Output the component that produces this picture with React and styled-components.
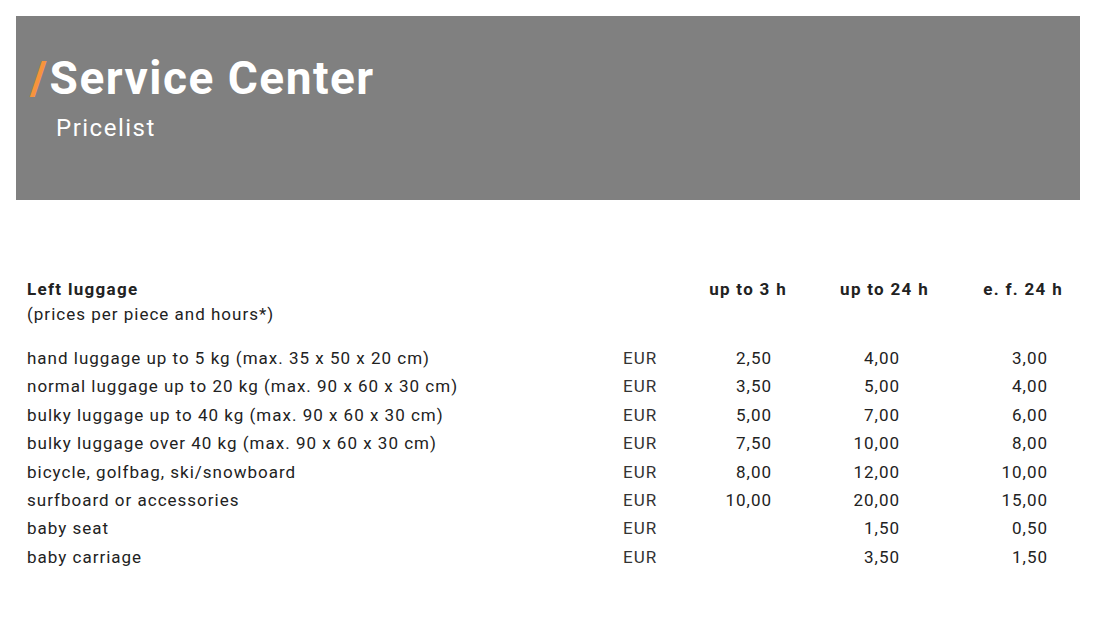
import styled, { createGlobalStyle } from "styled-components";

const Global = createGlobalStyle`
  body {
    margin: 0;
    background: #fff;
    font-family: Roboto, "Liberation Sans", sans-serif;
    color: #222;
  }
`;

const Page = styled.div`
  padding: 16px 13px 16px 16px;
`;

const Hero = styled.header`
  background-color: #808080;
  height: 184px;
  box-sizing: border-box;
  padding: 36px 0 0 14px;
  color: #fff;
`;

const Title = styled.h1`
  margin: 0;
  font-size: 46px;
  font-weight: 700;
  line-height: 52px;
  letter-spacing: 1.5px;
`;

const Slash = styled.span`
  color: #f7943c;
  margin-right: 1px;
`;

const Subtitle = styled.div`
  margin: 9px 0 0 26px;
  font-size: 24px;
  line-height: 30px;
  font-weight: 400;
  letter-spacing: 1.5px;
`;

const Prices = styled.section`
  padding: 76px 0 0 11px;
`;

const Grid = styled.div`
  display: grid;
  grid-template-columns: 596px 85px 78px 142px 134px;
  font-size: 17px;
  letter-spacing: 1px;
`;

const Head = styled.div`
  font-weight: 700;
  line-height: 26px;
  letter-spacing: 1.3px;
  text-align: ${(p) => (p.$right ? "right" : "left")};
  margin-right: -1px;
`;

const Note = styled.div`
  grid-column: 1 / -1;
  line-height: 24px;
  margin-bottom: 18px;
`;

const Cell = styled.div`
  line-height: 28.4px;
  text-align: ${(p) => (p.$right ? "right" : "left")};
  padding-right: ${(p) => p.$pad || 0}px;
  color: ${(p) => (p.$muted ? "#333" : "#222")};
`;

const rows = [
  ["hand luggage up to 5 kg (max. 35 x 50 x 20 cm)", "2,50", "4,00", "3,00"],
  ["normal luggage up to 20 kg (max. 90 x 60 x 30 cm)", "3,50", "5,00", "4,00"],
  ["bulky luggage up to 40 kg (max. 90 x 60 x 30 cm)", "5,00", "7,00", "6,00"],
  ["bulky luggage over 40 kg (max. 90 x 60 x 30 cm)", "7,50", "10,00", "8,00"],
  ["bicycle, golfbag, ski/snowboard", "8,00", "12,00", "10,00"],
  ["surfboard or accessories", "10,00", "20,00", "15,00"],
  ["baby seat", "", "1,50", "0,50"],
  ["baby carriage", "", "3,50", "1,50"],
];

export default function App() {
  return (
    <Page>
      <Global />
      <Hero>
        <Title>
          <Slash>/</Slash>Service Center
        </Title>
        <Subtitle>Pricelist</Subtitle>
      </Hero>
      <Prices>
        <Grid>
          <Head>Left luggage</Head>
          <Head />
          <Head $right>up to 3 h</Head>
          <Head $right>up to 24 h</Head>
          <Head $right>e. f. 24 h</Head>
          <Note>(prices per piece and hours*)</Note>
          {rows.map(([label, a, b, c]) => (
            <>
              <Cell key={label}>{label}</Cell>
              <Cell $muted>EUR</Cell>
              <Cell $right $pad={14}>{a}</Cell>
              <Cell $right $pad={28}>{b}</Cell>
              <Cell $right $pad={14}>{c}</Cell>
            </>
          ))}
        </Grid>
      </Prices>
    </Page>
  );
}
